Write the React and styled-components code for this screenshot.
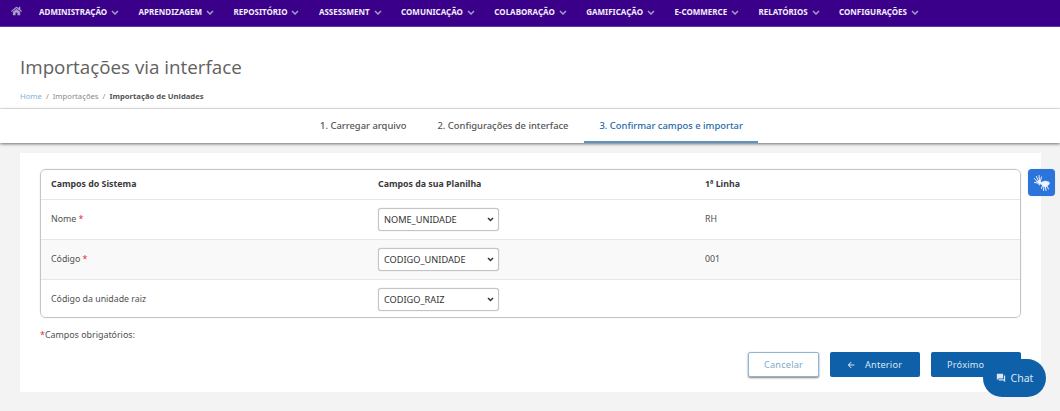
import React from "react";
import styled, { createGlobalStyle } from "styled-components";
import { FaHome } from "react-icons/fa";
import { MdForum, MdArrowBack } from "react-icons/md";

const GlobalStyle = createGlobalStyle`
  html, body {
    margin: 0;
    padding: 0;
    background: #f3f3f3;
    font-family: "Noto Sans", "Open Sans", sans-serif;
  }
  * { box-sizing: border-box; }
`;

const Page = styled.div`
  position: relative;
  width: 1060px;
  height: 411px;
  overflow: hidden;
  background: #f3f3f3;
`;

const Nav = styled.nav`
  display: flex;
  align-items: center;
  height: 27px;
  padding: 0 0 4px 11px;
  background: #3a008a;
  border-bottom: 1px solid #5a3a9a;
`;

const HomeIcon = styled(FaHome)`
  width: 11px;
  height: 10px;
  color: #a79ac8;
  margin-right: 17px;
`;

const NavItem = styled.a`
  display: flex;
  align-items: center;
  gap: 4px;
  margin-right: 19.4px;
  color: #f2eefa;
  font-size: 8px;
  font-weight: 700;
  white-space: nowrap;
`;

const Caret = styled.svg`
  width: 8px;
  height: 5px;
  margin-top: 2px;
  fill: none;
  stroke: #a79ac8;
  stroke-width: 1.5;
`;

const Header = styled.header`
  height: 82px;
  padding: 26px 20px 0;
  background: #fff;
  border-bottom: 1px solid #ececec;
`;

const Title = styled.h1`
  margin: 0;
  font-family: "Open Sans", sans-serif;
  font-size: 18.8px;
  font-weight: 400;
  line-height: 28px;
  color: #616161;
`;

const Breadcrumb = styled.div`
  display: flex;
  gap: 4px;
  margin-top: 9px;
  font-size: 7.7px;
  line-height: 12px;
  color: #8a8a8a;
`;

const Crumb = styled.span`
  color: ${({ $home, $current }) => ($home ? "#7fb0d8" : $current ? "#555" : "#8a8a8a")};
  font-weight: ${({ $current }) => ($current ? 700 : 400)};
`;

const Tabs = styled.div`
  display: flex;
  justify-content: center;
  height: 34px;
  padding-left: 3px;
  background: #fff;
  box-shadow: 0 1px 3px rgba(0, 0, 0, 0.55);
`;

const Tab = styled.div`
  display: flex;
  align-items: center;
  padding: 0 15.5px;
  font-size: 9.4px;
  font-weight: 500;
  white-space: nowrap;
  color: ${({ $active }) => ($active ? "#1f6aa8" : "#555")};
  border-bottom: 2px solid ${({ $active }) => ($active ? "#5b93c4" : "transparent")};
`;

const Card = styled.main`
  width: 1021px;
  height: 239px;
  margin: 10px 0 0 20px;
  padding: 16px 20px 0;
  background: #fff;
`;

const Table = styled.div`
  width: 981px;
  height: 149px;
  border: 1px solid #c4c4c4;
  border-radius: 6px;
  box-shadow: 0 0 1px #bbb;
  overflow: hidden;
`;

const Row = styled.div`
  display: grid;
  grid-template-columns: 327px 327px 1fr;
  align-items: center;
  height: ${({ $head }) => ($head ? "30px" : "40px")};
  padding-left: 10px;
  font-size: 8.8px;
  line-height: 12px;
  color: ${({ $head }) => ($head ? "#3a3a3a" : "#505050")};
  font-weight: ${({ $head }) => ($head ? 700 : 400)};
  background: ${({ $striped }) => ($striped ? "#f9f9f9" : "#fff")};
  border-bottom: 1px solid #e6e6e6;
  & > span { margin-top: ${({ $head }) => ($head ? "-2px" : "-1px")}; }
  &:last-child { border-bottom: 0; height: 39px; }
`;

const Star = styled.span`
  color: #e0303a;
`;

const Select = styled.select`
  appearance: none;
  width: 121px;
  height: 23px;
  padding: 0 5px;
  font-family: "Noto Sans", sans-serif;
  font-size: 9.2px;
  color: #333;
  background: #fff url("data:image/svg+xml,%3Csvg xmlns='http://www.w3.org/2000/svg' width='7' height='5'%3E%3Cpath d='M1 1l2.500 2.500L6 1' fill='none' stroke='%23333' stroke-width='1.500'/%3E%3C/svg%3E") no-repeat right 4px center;
  border: 1px solid #c4c4c4;
  border-radius: 3px;
  box-shadow: 0 0 1px rgba(0, 0, 0, 0.3);
`;

const Note = styled.p`
  margin: 10px 0 0;
  font-size: 8.9px;
  line-height: 14px;
  color: #505050;
`;

const Actions = styled.div`
  display: flex;
  justify-content: flex-end;
  gap: 11px;
  margin-top: 10px;
`;

const Button = styled.button`
  display: flex;
  align-items: center;
  gap: 9px;
  height: 25px;
  width: ${({ $w }) => $w}px;
  padding: 0 0 0 16px;
  font-family: "Noto Sans", sans-serif;
  font-size: 9.2px;
  letter-spacing: 0.2px;
  color: #dbe7f2;
  background: #0e60a8;
  border: 0;
  border-radius: 2px;
`;

const GhostButton = styled(Button)`
  justify-content: center;
  padding: 0;
  color: #7fa8cc;
  background: #fff;
  border: 1px solid #8fb6d6;
  box-shadow: 0 1px 2px rgba(0, 0, 0, 0.5);
`;

const SignButton = styled.div`
  position: absolute;
  left: 1028px;
  top: 169px;
  display: flex;
  align-items: center;
  justify-content: center;
  width: 27px;
  height: 27px;
  background: #2a74dc;
  border-radius: 4px;
  box-shadow: 0 0 1px rgba(0, 0, 0, 0.3);
`;

const ChatBubble = styled.div`
  position: absolute;
  left: 983px;
  top: 359px;
  display: flex;
  align-items: center;
  justify-content: center;
  gap: 5px;
  width: 63px;
  height: 38px;
  font-size: 10.5px;
  color: #dbe7f2;
  background: #0e60a8;
  border-radius: 19px;
`;

const menu = [
  "ADMINISTRAÇÃO",
  "APRENDIZAGEM",
  "REPOSITÓRIO",
  "ASSESSMENT",
  "COMUNICAÇÃO",
  "COLABORAÇÃO",
  "GAMIFICAÇÃO",
  "E-COMMERCE",
  "RELATÓRIOS",
  "CONFIGURAÇÕES",
];

const rows = [
  { label: "Nome", required: true, field: "NOME_UNIDADE", first: "RH" },
  { label: "Código", required: true, field: "CODIGO_UNIDADE", first: "001", striped: true },
  { label: "Código da unidade raiz", field: "CODIGO_RAIZ", first: "" },
];

// two hands, the libras widget button
function HandsIcon() {
  return (
    <svg width="18" height="18" viewBox="0 0 18 18" fill="#eef4fd" stroke="#eef4fd" strokeLinecap="round">
      <path d="M4 7.500l3 -1 1.500 2.500 -2 2z" strokeWidth="0.6" />
      <path d="M4.500 8L1.500 4.500M5.500 7L3.500 2.500M6.500 6.500L6 1.500M7.500 6.500L8.500 3M4.500 9L1.500 8.500" strokeWidth="1" fill="none" />
      <path d="M8 8.500l4 -1.500 4 1 0.500 2 -3 2.500 -3 0 -2.500 -2.500z" strokeWidth="0.6" />
      <path d="M9.500 11.500L8.500 14.500M11 12.500L10.500 16.500M12.500 12.500L13 16.500M14 12L15.500 15" strokeWidth="1" fill="none" />
    </svg>
  );
}

export default function App() {
  return (
    <Page>
      <GlobalStyle />
      <Nav>
        <HomeIcon />
        {menu.map((item) => (
          <NavItem key={item}>
            {item}
            <Caret viewBox="0 0 8 5">
              <path d="M1 1l3 3 3-3" />
            </Caret>
          </NavItem>
        ))}
      </Nav>
      <Header>
        <Title>Importações via interface</Title>
        <Breadcrumb>
          <Crumb $home>Home</Crumb>
          <span>/</span>
          <Crumb>Importações</Crumb>
          <span>/</span>
          <Crumb $current>Importação de Unidades</Crumb>
        </Breadcrumb>
      </Header>
      <Tabs>
        <Tab>1. Carregar arquivo</Tab>
        <Tab>2. Configurações de interface</Tab>
        <Tab $active>3. Confirmar campos e importar</Tab>
      </Tabs>
      <Card>
        <Table>
          <Row $head>
            <span>Campos do Sistema</span>
            <span>Campos da sua Planilha</span>
            <span>1ª Linha</span>
          </Row>
          {rows.map((row) => (
            <Row key={row.label} $striped={row.striped}>
              <span>
                {row.label} {row.required && <Star>*</Star>}
              </span>
              <Select defaultValue={row.field}>
                <option>{row.field}</option>
              </Select>
              <span>{row.first}</span>
            </Row>
          ))}
        </Table>
        <Note>
          <Star>*</Star>Campos obrigatórios:
        </Note>
        <Actions>
          <GhostButton $w={71}>Cancelar</GhostButton>
          <Button $w={90}>
            <MdArrowBack size={10} />
            Anterior
          </Button>
          <Button $w={90}>Próximo</Button>
        </Actions>
      </Card>
      <SignButton>
        <HandsIcon />
      </SignButton>
      <ChatBubble>
        <MdForum size={10} />
        Chat
      </ChatBubble>
    </Page>
  );
}
